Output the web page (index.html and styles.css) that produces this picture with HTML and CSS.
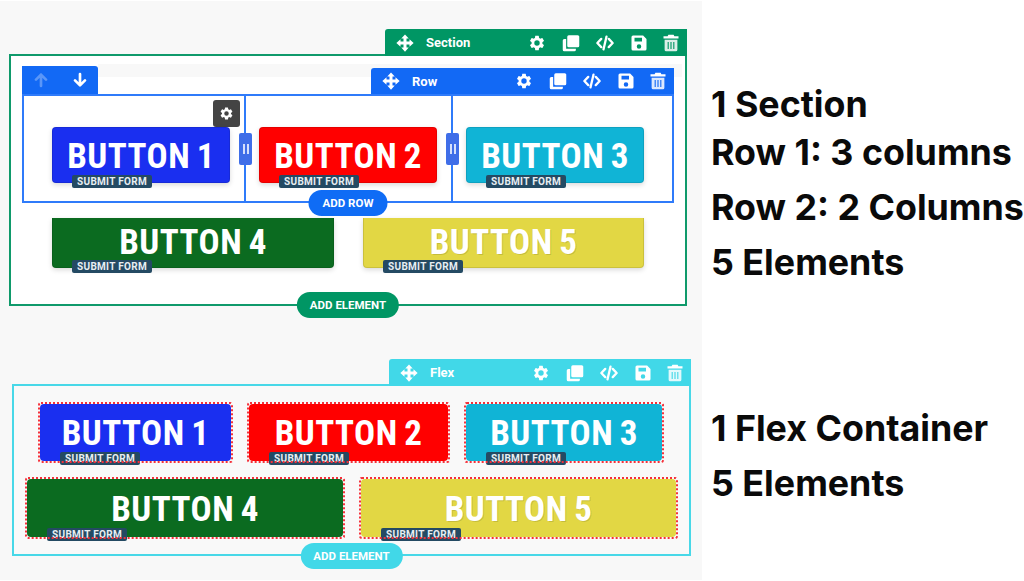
FILE: index.html
```html
<!DOCTYPE html>
<html lang="en">
<head>
    <meta charset="UTF-8">
    <meta name="viewport" content="width=device-width, initial-scale=1.0">
    <title>Section vs Flex Container</title>
    <link rel="stylesheet" href="styles.css">
</head>
<body>

<svg class="sprite" aria-hidden="true">
    <symbol id="i-move" viewBox="0 0 24 24">
        <path d="M12 .5l5 5.500h-3v4h4V7l5.500 5-5.500 5v-3h-4v4h3l-5 5.500-5-5.500h3v-4H6v3L.5 12 6 7v3h4V6H7z"/>
    </symbol>
    <symbol id="i-gear" viewBox="0 0 24 24">
        <path fill-rule="evenodd" d="M19.14 12.94c.04-.3.06-.61.06-.94 0-.32-.02-.64-.07-.94l2.03-1.58a.49.49 0 0 0 .12-.61l-1.92-3.32a.488.488 0 0 0-.59-.22l-2.39.96c-.5-.38-1.03-.7-1.62-.94l-.36-2.54a.484.484 0 0 0-.48-.41h-3.84c-.24 0-.43.17-.47.41l-.36 2.54c-.59.24-1.13.57-1.62.94l-2.39-.96c-.22-.08-.47 0-.59.22L2.74 8.87c-.12.21-.08.47.12.61l2.03 1.58c-.05.3-.09.63-.09.94s.02.64.07.94l-2.03 1.58a.49.49 0 0 0-.12.61l1.92 3.32c.12.22.37.29.59.22l2.39-.96c.5.38 1.03.7 1.62.94l.36 2.54c.05.24.24.41.48.41h3.84c.24 0 .44-.17.47-.41l.36-2.54c.59-.24 1.13-.56 1.62-.94l2.39.96c.22.08.47 0 .59-.22l1.92-3.32c.12-.22.07-.47-.12-.61l-2.01-1.58zM12 15.6A3.6 3.6 0 1 1 12 8.400a3.600 3.600 0 0 1 0 7.200z"/>
    </symbol>
    <symbol id="i-copy" viewBox="0 0 24 24">
        <rect x="7" y="1.500" width="16" height="16" rx="2"/>
        <path d="M1 8.500a2 2 0 0 1 2-2h2.500v13h13V21a2 2 0 0 1-2 2H3a2 2 0 0 1-2-2z"/>
    </symbol>
    <symbol id="i-code" viewBox="0 0 24 24">
        <path class="icon-line" d="M7 6.500L1.800 12 7 17.500M17 6.500L22.200 12 17 17.500M14 3.500L10 20.500"/>
    </symbol>
    <symbol id="i-save" viewBox="0 0 24 24">
        <path fill-rule="evenodd" d="M4 2h13.500L22 6.500V20a2 2 0 0 1-2 2H4a2 2 0 0 1-2-2V4a2 2 0 0 1 2-2zm2 3v5h10V5zm6 8.500a3 3 0 1 0 0 6 3 3 0 0 0 0-6z"/>
    </symbol>
    <symbol id="i-trash" viewBox="0 0 24 24">
        <path d="M8.500 1h7l1 2H22v3H2V3h5.500z"/>
        <path fill-rule="evenodd" opacity=".85" d="M3.500 7.500h17V21a2 2 0 0 1-2 2h-13a2 2 0 0 1-2-2zM7.500 10.500v9.500h1.500v-9.500zm3.750 0v9.500h1.500v-9.500zm3.750 0v9.500h1.500v-9.500z"/>
    </symbol>
    <symbol id="i-up" viewBox="0 0 24 24">
        <path class="icon-line icon-line-bold" d="M12 21V4M4.500 11.500L12 4l7.500 7.500"/>
    </symbol>
    <symbol id="i-down" viewBox="0 0 24 24">
        <path class="icon-line icon-line-bold" d="M12 3v17M4.500 12.500L12 20l7.500-7.500"/>
    </symbol>
</svg>

<div class="page">
    <main class="canvas">

        <section class="frame section-frame">
            <div class="toolbar toolbar-section">
                <svg class="icon"><use href="#i-move"/></svg>
                <span class="toolbar-label">Section</span>
                <svg class="icon"><use href="#i-gear"/></svg>
                <svg class="icon"><use href="#i-copy"/></svg>
                <svg class="icon"><use href="#i-code"/></svg>
                <svg class="icon"><use href="#i-save"/></svg>
                <svg class="icon"><use href="#i-trash"/></svg>
            </div>

            <div class="row-frame">
                <div class="row-arrows">
                    <svg class="icon icon-faded"><use href="#i-up"/></svg>
                    <svg class="icon"><use href="#i-down"/></svg>
                </div>
                <div class="toolbar toolbar-row">
                    <svg class="icon"><use href="#i-move"/></svg>
                    <span class="toolbar-label">Row</span>
                    <svg class="icon"><use href="#i-gear"/></svg>
                    <svg class="icon"><use href="#i-copy"/></svg>
                    <svg class="icon"><use href="#i-code"/></svg>
                    <svg class="icon"><use href="#i-save"/></svg>
                    <svg class="icon"><use href="#i-trash"/></svg>
                </div>

                <div class="col col-first">
                    <div class="col-gear"><svg class="icon"><use href="#i-gear"/></svg></div>
                    <span class="handle"></span>
                    <a class="btn btn-blue">BUTTON 1<span class="tag">SUBMIT FORM</span></a>
                </div>
                <div class="col col-second">
                    <span class="handle"></span>
                    <a class="btn btn-red">BUTTON 2<span class="tag">SUBMIT FORM</span></a>
                </div>
                <div class="col col-third">
                    <a class="btn btn-teal">BUTTON 3<span class="tag">SUBMIT FORM</span></a>
                </div>

                <span class="pill pill-row">ADD ROW</span>
            </div>

            <div class="second-row">
                <a class="btn btn-flat btn-green">BUTTON 4<span class="tag">SUBMIT FORM</span></a>
                <a class="btn btn-flat btn-yellow">BUTTON 5<span class="tag">SUBMIT FORM</span></a>
            </div>

            <span class="pill pill-section">ADD ELEMENT</span>
        </section>

        <section class="frame flex-frame">
            <div class="toolbar toolbar-flex">
                <svg class="icon"><use href="#i-move"/></svg>
                <span class="toolbar-label">Flex</span>
                <svg class="icon"><use href="#i-gear"/></svg>
                <svg class="icon"><use href="#i-copy"/></svg>
                <svg class="icon"><use href="#i-code"/></svg>
                <svg class="icon"><use href="#i-save"/></svg>
                <svg class="icon"><use href="#i-trash"/></svg>
            </div>

            <div class="flex-line flex-line-top">
                <a class="btn btn-dashed btn-blue w-191">BUTTON 1<span class="tag">SUBMIT FORM</span></a>
                <a class="btn btn-dashed btn-red w-199">BUTTON 2<span class="tag">SUBMIT FORM</span></a>
                <a class="btn btn-dashed btn-teal w-196">BUTTON 3<span class="tag">SUBMIT FORM</span></a>
            </div>
            <div class="flex-line flex-line-bottom">
                <a class="btn btn-dashed btn-green w-316">BUTTON 4<span class="tag">SUBMIT FORM</span></a>
                <a class="btn btn-dashed btn-yellow w-315">BUTTON 5<span class="tag">SUBMIT FORM</span></a>
            </div>

            <span class="pill pill-flex">ADD ELEMENT</span>
        </section>
    </main>

    <aside class="notes">
        <div class="notes-group notes-section">
            <p class="note note-a">1 Section</p>
            <p class="note note-b">Row 1: 3 columns</p>
            <p class="note note-c">Row 2: 2 Columns</p>
            <p class="note note-c">5 Elements</p>
        </div>
        <div class="notes-group notes-flex">
            <p class="note">1 Flex Container</p>
            <p class="note note-c">5 Elements</p>
        </div>
    </aside>
</div>

</body>
</html>
```

FILE: styles.css
```css
body {
    margin: 0;
    padding: 0;
    background-color: #fff;
    font-family: Roboto, "Liberation Sans", sans-serif;
    overflow: hidden;
}
.sprite {
    display: none;
}
.page {
    display: flex;
    width: 1024px;
    height: 581px;
}

/* left side, the two builder views */
.canvas {
    box-sizing: border-box;
    width: 702px;
    height: 579px;
    margin-top: 1px;
    padding: 53px 0 0 9px;
    background-color: #f8f8f8;
}
.frame {
    position: relative;
    box-sizing: border-box;
}
.section-frame {
    width: 678px;
    height: 252px;
    padding: 38px 11px 0;
    background-color: #fff;
    border: 2px solid #0f9a6b;
}
.flex-frame {
    width: 679px;
    height: 172px;
    margin: 78px 0 0 3px;
    padding-top: 18px;
    background-color: #f9f9f9;
    border: 2px solid #48d8e8;
}

/* toolbars */
.toolbar {
    position: absolute;
    top: -27px;
    right: -2px;
    box-sizing: border-box;
    display: flex;
    align-items: center;
    gap: 16px;
    width: 302px;
    height: 27px;
    padding: 0 7px 0 11px;
    border-radius: 3px 0 0 0;
    color: #fff;
}
.toolbar .icon:last-child {
    margin-left: -2px;
}
.toolbar-section {
    background-color: #009664;
}
.toolbar-row {
    top: -28px;
    right: -2px;
    width: 303px;
    height: 26px;
    background-color: #1269f5;
}
.toolbar-flex {
    background-color: #41d8e8;
}
.toolbar-label {
    flex: 1;
    margin-left: -4px;
    font-size: 13px;
    font-weight: 700;
}
.icon {
    width: 18px;
    height: 18px;
    flex: none;
    fill: currentColor;
}
.icon-line {
    fill: none;
    stroke: currentColor;
    stroke-width: 3;
    stroke-linecap: round;
    stroke-linejoin: round;
}
.icon-line-bold {
    stroke-width: 4;
}
.icon-faded {
    opacity: 0.3;
}

/* row */
.row-frame {
    position: relative;
    display: grid;
    grid-template-columns: 222px 207px 1fr;
    box-sizing: border-box;
    height: 109px;
    border: 2px solid #2f7bfa;
}
.row-frame::before {
    content: "";
    position: absolute;
    top: -32px;
    left: 74px;
    right: -10px;
    height: 13px;
    background-color: #f8f8f8;
}
.row-arrows {
    position: absolute;
    top: -30px;
    left: -2px;
    box-sizing: border-box;
    display: flex;
    align-items: center;
    justify-content: space-between;
    width: 76px;
    height: 28px;
    padding: 0 10px 0 11px;
    border-radius: 0 3px 0 0;
    background-color: #1269f5;
    color: #fff;
}
.row-arrows .icon {
    width: 16px;
    height: 16px;
}
.col {
    position: relative;
    box-sizing: border-box;
    padding-top: 31px;
}
.col-first {
    padding-left: 28px;
    border-right: 2px solid #2f7bfa;
}
.col-second {
    padding-left: 13px;
    border-right: 2px solid #2f7bfa;
}
.col-third {
    padding-left: 13px;
}
.col-gear {
    position: absolute;
    top: 4px;
    right: 4px;
    display: flex;
    align-items: center;
    justify-content: center;
    width: 27px;
    height: 27px;
    border-radius: 3px;
    background-color: #444;
    color: #fff;
}
.col-gear .icon {
    width: 15px;
    height: 15px;
}
.handle {
    position: absolute;
    top: 37px;
    right: -8px;
    z-index: 2;
    width: 13px;
    height: 32px;
    border-radius: 2px;
    background-color: #3f6ee8;
}
.handle::after {
    content: "";
    position: absolute;
    top: 11px;
    left: 4px;
    width: 1.500px;
    height: 10px;
    border-left: 2px solid #d5e0fb;
    border-right: 2px solid #d5e0fb;
}

/* buttons */
.btn {
    position: relative;
    box-sizing: border-box;
    display: flex;
    align-items: center;
    justify-content: center;
    width: 178px;
    height: 56px;
    padding-top: 3px;
    border-radius: 4px;
    border: 1px solid rgba(0, 0, 0, 0.1);
    box-shadow: 0 2px 5px rgba(0, 0, 0, 0.15);
    color: #fff;
    font-size: 35px;
    font-stretch: 85%;
    font-weight: 700;
    letter-spacing: 0.500px;
    word-spacing: -2px;
    line-height: 0.8;
    white-space: nowrap;
}
.btn-flat {
    width: 282px;
    height: 50px;
    padding-top: 0;
    border-top: none;
    border-radius: 0 0 4px 4px;
}
.btn-dashed {
    height: 57px;
    border: none;
    box-shadow: none;
}
.btn-dashed::after {
    content: "";
    position: absolute;
    inset: -2px;
    z-index: 2;
    border: 2px dotted #f5303a;
    border-radius: 3px;
}
.btn-blue {
    background-color: #1a2ff0;
}
.btn-red {
    background-color: #ff0000;
}
.btn-teal {
    background-color: #10b4d6;
}
.btn-green {
    background-color: #0b6b20;
}
.btn-yellow {
    background-color: #e2d744;
    text-shadow: 1px 1px 0 rgba(0, 0, 0, 0.12);
}
.w-191 { width: 191px; }
.w-199 { width: 199px; }
.w-196 { width: 196px; }
.w-316 { width: 316px; height: 58px; }
.w-315 { width: 315px; height: 58px; }
.tag {
    position: absolute;
    left: 19px;
    bottom: -6px;
    z-index: 1;
    width: 80px;
    height: 13px;
    border-radius: 2px;
    background-color: #244a63;
    color: #e8eef2;
    font-size: 10px;
    font-stretch: 100%;
    font-weight: 700;
    line-height: 13px;
    letter-spacing: 0.300px;
    word-spacing: 0;
    text-align: center;
    text-shadow: none;
}
.btn-dashed .tag {
    left: 20px;
    bottom: -4px;
}

/* second row of the section */
.second-row {
    display: flex;
    gap: 29px;
    margin: 15px 0 0 30px;
}
.second-row .btn-yellow {
    width: 281px;
}

/* flex container lines */
.flex-line {
    display: flex;
}
.flex-line-top {
    gap: 18px;
    margin-left: 26px;
}
.flex-line-bottom {
    gap: 18px;
    margin: 18px 0 0 13px;
}

/* pills */
.pill {
    position: absolute;
    left: 50%;
    z-index: 3;
    transform: translateX(-50%);
    height: 26px;
    padding: 0 13px;
    border-radius: 13px;
    color: #fff;
    font-size: 11.500px;
    font-weight: 700;
    line-height: 26px;
    white-space: nowrap;
}
.pill-row {
    bottom: -15px;
    width: 79px;
    box-sizing: border-box;
    text-align: center;
    padding: 0;
    background-color: #0f6cf5;
}
.pill-section {
    bottom: -14px;
    background-color: #009664;
}
.pill-flex {
    bottom: -15px;
    background-color: #41d8e8;
}

/* right side notes */
.notes {
    flex: 1;
    padding: 84px 0 0 9px;
    color: #0a0a0a;
    font-family: Inter, "Liberation Sans", sans-serif;
    font-size: 35.800px;
    font-weight: 700;
    white-space: nowrap;
}
.note {
    margin: 0;
    line-height: 40px;
}
.note-b {
    margin-top: 8px;
}
.note-c {
    margin-top: 15px;
}
.notes-flex {
    margin-top: 126px;
}
```
